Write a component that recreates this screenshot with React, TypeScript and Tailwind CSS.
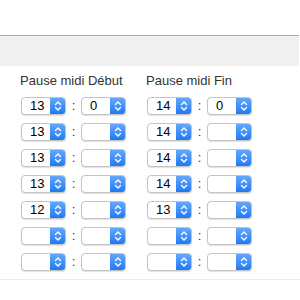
import React from 'react';

const debut: [string, string][] = [
  ['13', '0'],
  ['13', ''],
  ['13', ''],
  ['13', ''],
  ['12', ''],
  ['', ''],
  ['', ''],
];

const fin: [string, string][] = [
  ['14', '0'],
  ['14', ''],
  ['14', ''],
  ['14', ''],
  ['13', ''],
  ['', ''],
  ['', ''],
];

function Select({ value }: { value: string }) {
  return (
    <div className="flex h-[18px] w-[45px] overflow-hidden rounded-[4px] border border-[#c4c4c4] bg-white shadow-[0_1px_1px_rgba(0,0,0,0.12)]">
      <div className="flex-1 pl-[8px] text-[13px] leading-[16px] text-black">{value}</div>
      <div className="flex w-[15px] items-center justify-center bg-gradient-to-b from-[#62a7fc] to-[#1b7af5]">
        <svg width="8" height="12" viewBox="0 0 8 12" fill="none" stroke="white" strokeWidth="1.4" strokeLinecap="round" strokeLinejoin="round">
          <path d="M1.5 4.5 L4 2 L6.5 4.5" />
          <path d="M1.5 7.5 L4 10 L6.5 7.5" />
        </svg>
      </div>
    </div>
  );
}

function Column({ title, rows }: { title: string; rows: [string, string][] }) {
  return (
    <div className="flex flex-col">
      <div className="h-[24px] text-[13px] leading-[15px] text-[#333]">{title}</div>
      <div className="flex flex-col gap-[8px] pl-[1px]">
        {rows.map((r, i) => (
          <div key={i} className="flex items-center">
            <Select value={r[0]} />
            <span className="w-[15px] text-center text-[13px] leading-[16px] text-[#333]">:</span>
            <Select value={r[1]} />
          </div>
        ))}
      </div>
    </div>
  );
}

export default function App() {
  return (
    <div className="h-[300px] w-[300px] bg-white" style={{ fontFamily: '"Liberation Sans", Arial, sans-serif' }}>
      <div className="h-[35px]" />
      <div className="h-[31px] mr-[1px] border-t border-[#ababab] bg-[#f0f0f0]" />
      <div className="flex gap-[20px] pl-[20px] pt-[7px]">
        <Column title="Pause midi Début" rows={debut} />
        <Column title="Pause midi Fin" rows={fin} />
      </div>
      <div className="mt-[8px] border-t border-[#ececec]" />
    </div>
  );
}
